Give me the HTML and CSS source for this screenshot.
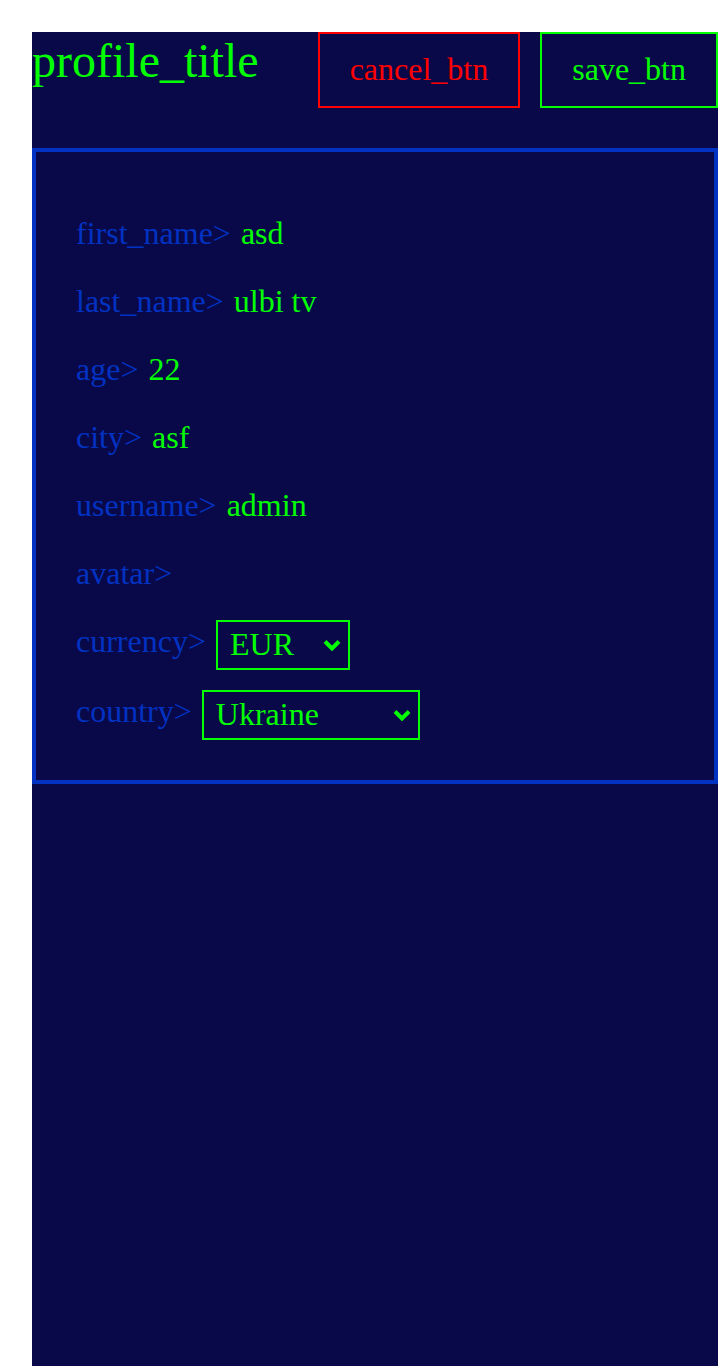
FILE: index.html
```html
<!DOCTYPE html>
<html lang="en">
<head>
<meta charset="utf-8">
<title>Profile</title>
<link rel="stylesheet" href="styles.css">
</head>
<body>
<div class="page">
  <div class="header">
    <h1 class="title">profile_title</h1>
    <div class="actions">
      <button class="btn btn-red">cancel_btn</button>
      <button class="btn btn-green">save_btn</button>
    </div>
  </div>
  <div class="card">
    <div class="row"><span class="label">first_name&gt;</span><span class="value">asd</span></div>
    <div class="row"><span class="label">last_name&gt;</span><span class="value">ulbi tv</span></div>
    <div class="row"><span class="label">age&gt;</span><span class="value">22</span></div>
    <div class="row"><span class="label">city&gt;</span><span class="value">asf</span></div>
    <div class="row"><span class="label">username&gt;</span><span class="value">admin</span></div>
    <div class="row"><span class="label">avatar&gt;</span><span class="value"></span></div>
    <div class="row row-select">
      <span class="label">currency&gt;</span>
      <span class="select-wrap">
        <select class="select">
          <option>RUB</option>
          <option selected>EUR</option>
          <option>USD</option>
        </select>
        <svg class="chevron" width="18" height="12" viewBox="0 0 18 12" aria-hidden="true"><polyline points="2,2.5 9,9.5 16,2.5" fill="none" stroke="#04ff04" stroke-width="4" stroke-linejoin="miter" stroke-linecap="butt"/></svg>
      </span>
    </div>
    <div class="row row-select">
      <span class="label">country&gt;</span>
      <span class="select-wrap">
        <select class="select">
          <option>Armenia</option>
          <option>Russia</option>
          <option>Belarus</option>
          <option>Kazakhstan</option>
          <option selected>Ukraine</option>
        </select>
        <svg class="chevron" width="18" height="12" viewBox="0 0 18 12" aria-hidden="true"><polyline points="2,2.5 9,9.5 16,2.5" fill="none" stroke="#04ff04" stroke-width="4" stroke-linejoin="miter" stroke-linecap="butt"/></svg>
      </span>
    </div>
  </div>
</div>
</body>
</html>
```

FILE: styles.css
```css
html, body {
  margin: 0;
  padding: 0;
  background: #ffffff;
}

body {
  font-family: "Liberation Serif", "Times New Roman", serif;
}

.page {
  margin: 32px 0 0 32px;
  min-height: calc(100vh - 32px);
  background: #090949;
  box-sizing: border-box;
}

.header {
  display: flex;
  align-items: flex-start;
}

.title {
  margin: 0;
  font-weight: normal;
  font-size: 48px;
  line-height: 58px;
  color: #04ff04;
}

.actions {
  margin-left: auto;
  display: flex;
  gap: 20px;
}

.btn {
  font-family: "Liberation Serif", "Times New Roman", serif;
  font-size: 32px;
  line-height: 36px;
  padding: 17px 30px 19px;
  background: transparent;
  border: 2px solid;
  border-radius: 0;
  margin: 0;
  cursor: pointer;
}

.btn-red {
  color: #ff0000;
  border-color: #ff0000;
}

.btn-green {
  color: #04ff04;
  border-color: #04ff04;
}

.card {
  margin-top: 40px;
  border: 4px solid #0232c2;
  padding: 60px 40px 40px;
  display: flex;
  flex-direction: column;
  gap: 20px;
}

.row {
  display: flex;
  align-items: flex-start;
  gap: 10px;
  min-height: 48px;
  font-size: 32px;
  line-height: 42px;
}

.row-select {
  min-height: 50px;
}

.label {
  color: #0232c2;
}

.value {
  color: #04ff04;
}

.select-wrap {
  position: relative;
  display: inline-flex;
}

.select {
  -webkit-appearance: none;
  appearance: none;
  font-family: "Liberation Serif", "Times New Roman", serif;
  font-size: 32px;
  height: 50px;
  padding: 0 52px 3px 12px;
  color: #04ff04;
  background: transparent;
  border: 2px solid #04ff04;
  border-radius: 0;
  outline: none;
  margin: 0;
}

.select option {
  background: #090949;
  color: #04ff04;
}

.chevron {
  position: absolute;
  right: 9px;
  top: 19px;
  pointer-events: none;
}
```
